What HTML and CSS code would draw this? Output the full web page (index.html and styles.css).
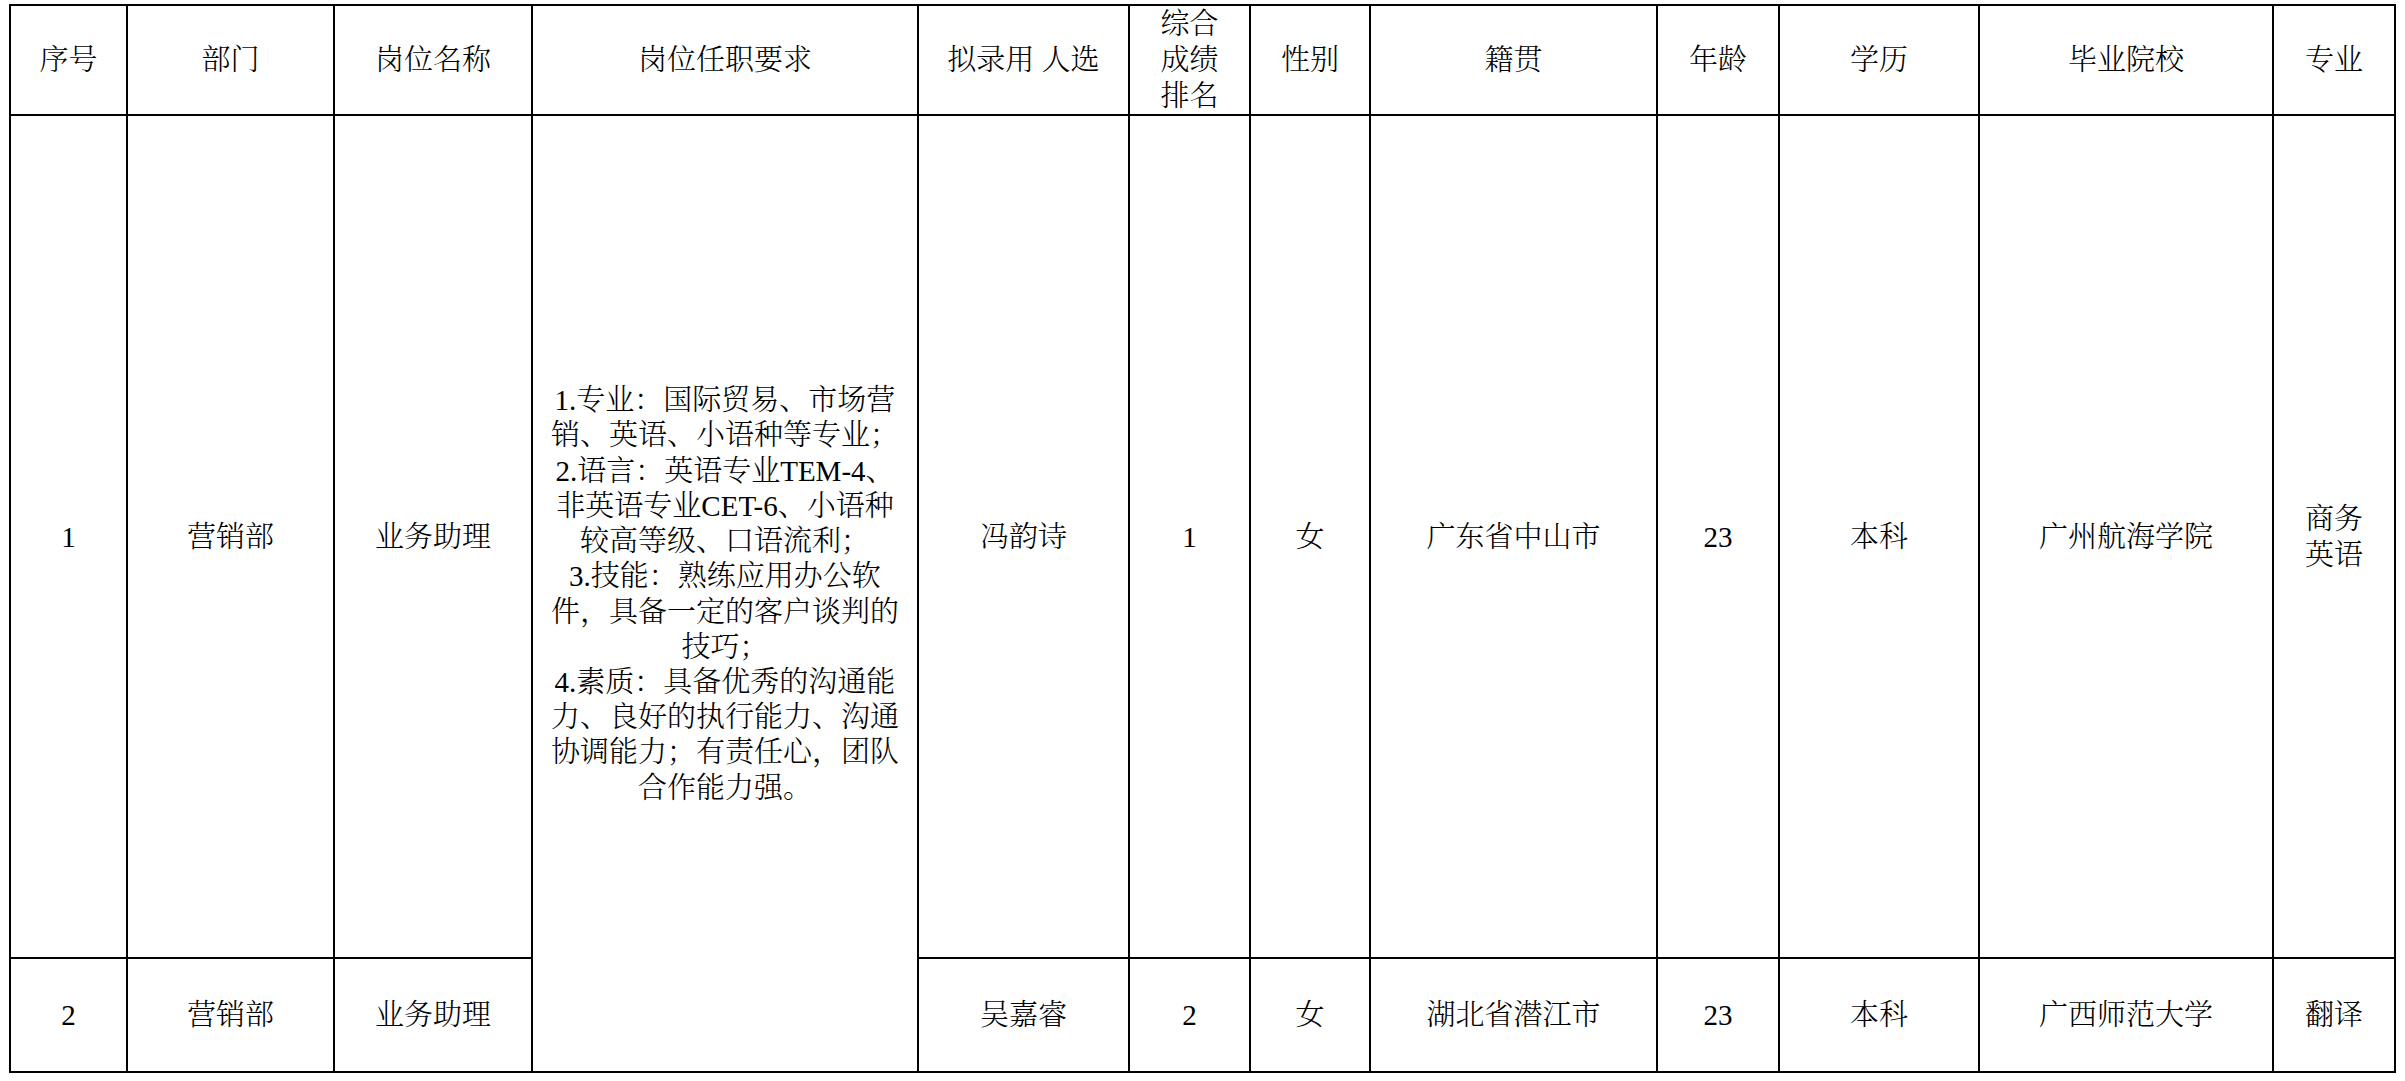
FILE: index.html
```html
<!DOCTYPE html>
<html lang="zh-CN">
<head>
<meta charset="utf-8">
<title>拟录用人选</title>
<link rel="stylesheet" href="styles.css">
</head>
<body>
<table class="sheet">
  <colgroup>
    <col class="c-no">
    <col class="c-dept">
    <col class="c-post">
    <col class="c-req">
    <col class="c-name">
    <col class="c-rank">
    <col class="c-sex">
    <col class="c-home">
    <col class="c-age">
    <col class="c-edu">
    <col class="c-school">
    <col class="c-major">
  </colgroup>
  <thead>
    <tr class="head-row">
      <th>序号</th>
      <th>部门</th>
      <th>岗位名称</th>
      <th>岗位任职要求</th>
      <th>拟录用 人选</th>
      <th class="stack">综合<br>成绩<br>排名</th>
      <th>性别</th>
      <th>籍贯</th>
      <th>年龄</th>
      <th>学历</th>
      <th>毕业院校</th>
      <th>专业</th>
    </tr>
  </thead>
  <tbody>
    <tr class="row-tall">
      <td>1</td>
      <td>营销部</td>
      <td>业务助理</td>
      <td rowspan="2" class="req">1.专业：国际贸易、市场营<br>销、英语、小语种等专业；<br>2.语言：英语专业TEM-4、<br>非英语专业CET-6、小语种<br>较高等级、口语流利；<br>3.技能：熟练应用办公软<br>件，具备一定的客户谈判的<br>技巧；<br>4.素质：具备优秀的沟通能<br>力、良好的执行能力、沟通<br>协调能力；有责任心，团队<br>合作能力强。</td>
      <td>冯韵诗</td>
      <td>1</td>
      <td>女</td>
      <td>广东省中山市</td>
      <td>23</td>
      <td>本科</td>
      <td>广州航海学院</td>
      <td class="stack">商务<br>英语</td>
    </tr>
    <tr class="row-short">
      <td>2</td>
      <td>营销部</td>
      <td>业务助理</td>
      <td>吴嘉睿</td>
      <td>2</td>
      <td>女</td>
      <td>湖北省潜江市</td>
      <td>23</td>
      <td>本科</td>
      <td>广西师范大学</td>
      <td>翻译</td>
    </tr>
  </tbody>
</table>
</body>
</html>
```

FILE: styles.css
```css
html, body {
  margin: 0;
  padding: 0;
  background: #ffffff;
}

body {
  color: #000000;
  font-family: "Liberation Serif", "SimSun", "Noto Serif CJK SC", "Noto Sans CJK SC", serif;
  font-size: 29px;
  font-weight: 300;
}

.sheet {
  margin: 4px 0 0 9px;
  border-collapse: collapse;
  table-layout: fixed;
  width: 2387px;
}

.c-no { width: 117px; }
.c-dept { width: 207px; }
.c-post { width: 198px; }
.c-req { width: 386px; }
.c-name { width: 211px; }
.c-rank { width: 121px; }
.c-sex { width: 120px; }
.c-home { width: 287px; }
.c-age { width: 122px; }
.c-edu { width: 200px; }
.c-school { width: 294px; }
.c-major { width: 122px; }

.sheet th,
.sheet td {
  border: 2px solid #000000;
  padding: 0;
  text-align: center;
  vertical-align: middle;
  font-weight: 300;
  line-height: 36px;
}

.head-row { height: 109px; }
.row-tall { height: 843px; }
.row-short { height: 114px; }

.sheet .req {
  line-height: 35.2px;
  padding-top: 2px;
}

.sheet .stack {
  line-height: 36px;
}
```
